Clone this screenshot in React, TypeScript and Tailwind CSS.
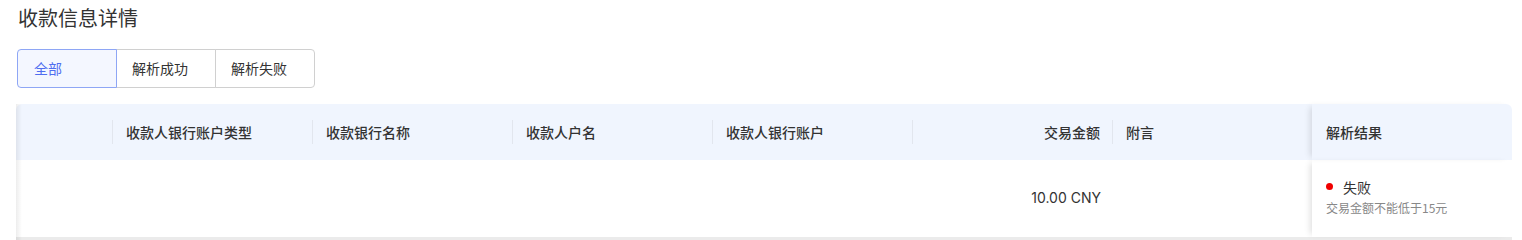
import React from 'react';

const font = { fontFamily: '"Noto Sans CJK SC", "Noto Sans", sans-serif' };

export default function App() {
  const tabs = ['全部', '解析成功', '解析失败'];
  const columns = ['收款人银行账户类型', '收款银行名称', '收款人户名', '收款人银行账户'];

  return (
    <div className="w-[1522px] h-[240px] bg-white pl-[16px] pt-[4px] overflow-hidden text-[#333]" style={font}>
      {/* Title */}
      <h2 className="pl-[2px] text-[20px] leading-[28px] font-normal text-[#333]">收款信息详情</h2>

      {/* Segmented filter */}
      <div className="mt-[17px] ml-[1px] flex">
        {tabs.map((t, i) => (
          <div
            key={t}
            className={
              i === 0
                ? 'w-[100px] h-[39px] flex items-center pl-[16px] text-[14px] text-[#4f6ef0] bg-[#f4f7ff] border border-[#8ea6f5] rounded-l-[4px] relative z-10'
                : i === tabs.length - 1
                ? 'w-[100px] h-[39px] flex items-center pl-[15px] text-[14px] text-[#333] bg-white border border-[#d0d0d0] -ml-px rounded-r-[4px]'
                : 'w-[100px] h-[39px] flex items-center pl-[15px] text-[14px] text-[#333] bg-white border border-[#d0d0d0] -ml-px'
            }
          >
            {t}
          </div>
        ))}
      </div>

      {/* Table */}
      <div className="mt-[16px] w-[1496px] relative">
        {/* left edge shadow */}
        <div className="absolute left-0 top-0 bottom-0 w-[6px] z-20 pointer-events-none bg-gradient-to-r from-[rgba(0,0,0,0.07)] to-transparent" />

        {/* Header */}
        <div className="flex h-[56px] bg-[#f0f5fe] rounded-t-[6px] text-[14px] font-medium text-[#333]">
          <div className="w-[96px] shrink-0" />
          {columns.map((c) => (
            <div key={c} className="w-[200px] shrink-0 flex items-center relative pl-[14px]">
              <span className="absolute left-0 top-[16px] h-[24px] w-px bg-[#e2e6ee]" />
              {c}
            </div>
          ))}
          <div className="w-[200px] shrink-0 flex items-center justify-end relative pr-[12px]">
            <span className="absolute left-0 top-[16px] h-[24px] w-px bg-[#e2e6ee]" />
            交易金额
          </div>
          <div className="w-[200px] shrink-0 flex items-center relative pl-[14px]">
            <span className="absolute left-0 top-[16px] h-[24px] w-px bg-[#e2e6ee]" />
            附言
          </div>
          <div className="w-[200px] shrink-0 flex items-center pl-[14px] shadow-[-5px_0_6px_-3px_rgba(0,0,0,0.12)] rounded-tr-[6px]">
            解析结果
          </div>
        </div>

        {/* Row */}
        <div className="flex h-[80px] border-b-[3px] border-[#ebebeb] text-[14px] text-[#333]">
          <div className="w-[96px] shrink-0" />
          {columns.map((c) => (
            <div key={c} className="w-[200px] shrink-0" />
          ))}
          <div className="w-[200px] shrink-0 flex items-center justify-end pr-[11px] pb-[3px] text-[#333]" style={{ fontFamily: 'Inter, "Noto Sans", sans-serif' }}>
            10.00 CNY
          </div>
          <div className="w-[200px] shrink-0" />
          <div className="w-[200px] shrink-0 flex flex-col justify-center pl-[14px] pb-[4px] shadow-[-5px_0_6px_-3px_rgba(0,0,0,0.12)]">
            <div className="flex items-center gap-[10px] leading-[22px]">
              <span className="w-[7px] h-[7px] rounded-full bg-[#f00000]" />
              <span>失败</span>
            </div>
            <div className="text-[12px] leading-[20px] text-[#888]">交易金额不能低于15元</div>
          </div>
        </div>
      </div>
    </div>
  );
}
